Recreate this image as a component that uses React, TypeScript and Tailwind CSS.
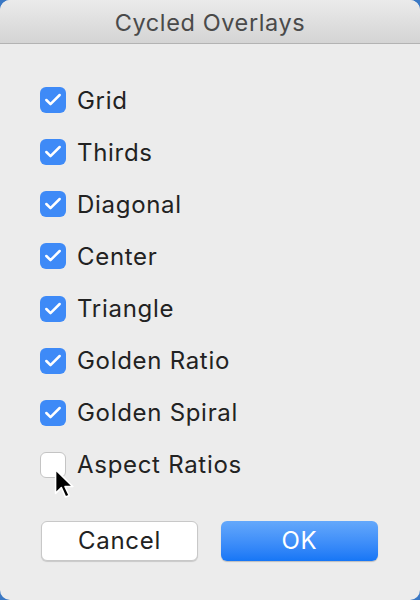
import { Check } from 'lucide-react';

const items = [
  { label: 'Grid', checked: true },
  { label: 'Thirds', checked: true },
  { label: 'Diagonal', checked: true },
  { label: 'Center', checked: true },
  { label: 'Triangle', checked: true },
  { label: 'Golden Ratio', checked: true },
  { label: 'Golden Spiral', checked: true },
  { label: 'Aspect Ratios', checked: false },
];

function Cursor() {
  return (
    <svg className="absolute left-[14px] top-[16px]" width="21" height="34" viewBox="0 0 20 32">
      <path d="M1.5 1.5 L1.5 24 L7 18.5 L11 27.5 L14.5 26 L10.5 17.5 L18 17.5 Z" fill="#000" stroke="#fff" strokeWidth="1.5" strokeLinejoin="round" />
    </svg>
  );
}

export default function App() {
  return (
    <div className="w-[420px] h-[600px] bg-[#3a78c4]" style={{ fontFamily: 'Inter, "Liberation Sans", Arial, sans-serif' }}>
      <div className="w-full h-full rounded-[10px] overflow-hidden bg-[#ececec] flex flex-col">
        {/* Title bar */}
        <div className="h-[44px] shrink-0 flex items-center justify-center bg-gradient-to-b from-[#ebebeb] to-[#d4d4d4] border-b border-[#b3b3b3]">
          <span className="text-[23.5px] tracking-[0.6px] text-[#4a4a4a] pt-[3px]">Cycled Overlays</span>
        </div>

        {/* Options */}
        <div className="flex flex-col pl-[40px] pt-[43px] gap-[26.15px]">
          {items.map((it) => (
            <div key={it.label} className="flex items-center h-[26px] gap-[11px]">
              <div className="relative">
                {it.checked ? (
                  <div className="w-[26px] h-[26px] rounded-[6px] bg-[#3e8af7] flex items-center justify-center">
                    <Check className="w-[20px] h-[20px] text-white" strokeWidth={3} />
                  </div>
                ) : (
                  <div className="w-[26px] h-[26px] rounded-[6px] bg-white border border-[#c4c4c4]" />
                )}
                {!it.checked && <Cursor />}
              </div>
              <span className="text-[24px] tracking-[0.7px] text-[#222222] pt-[1px]">{it.label}</span>
            </div>
          ))}
        </div>

        {/* Buttons */}
        <div className="flex gap-[23px] pl-[41px] pt-[43px]">
          <button className="w-[157px] h-[40px] rounded-[6px] bg-white border border-[#c8c8c8] shadow-[0_1px_1px_rgba(0,0,0,0.15)] text-[24px] tracking-[0.7px] text-[#222222]">
            Cancel
          </button>
          <button className="w-[157px] h-[40px] rounded-[6px] bg-gradient-to-b from-[#64a8fb] to-[#1576f6] shadow-[0_1px_1px_rgba(0,0,0,0.2)] text-[24px] tracking-[0.7px] text-white">
            OK
          </button>
        </div>
      </div>
    </div>
  );
}
